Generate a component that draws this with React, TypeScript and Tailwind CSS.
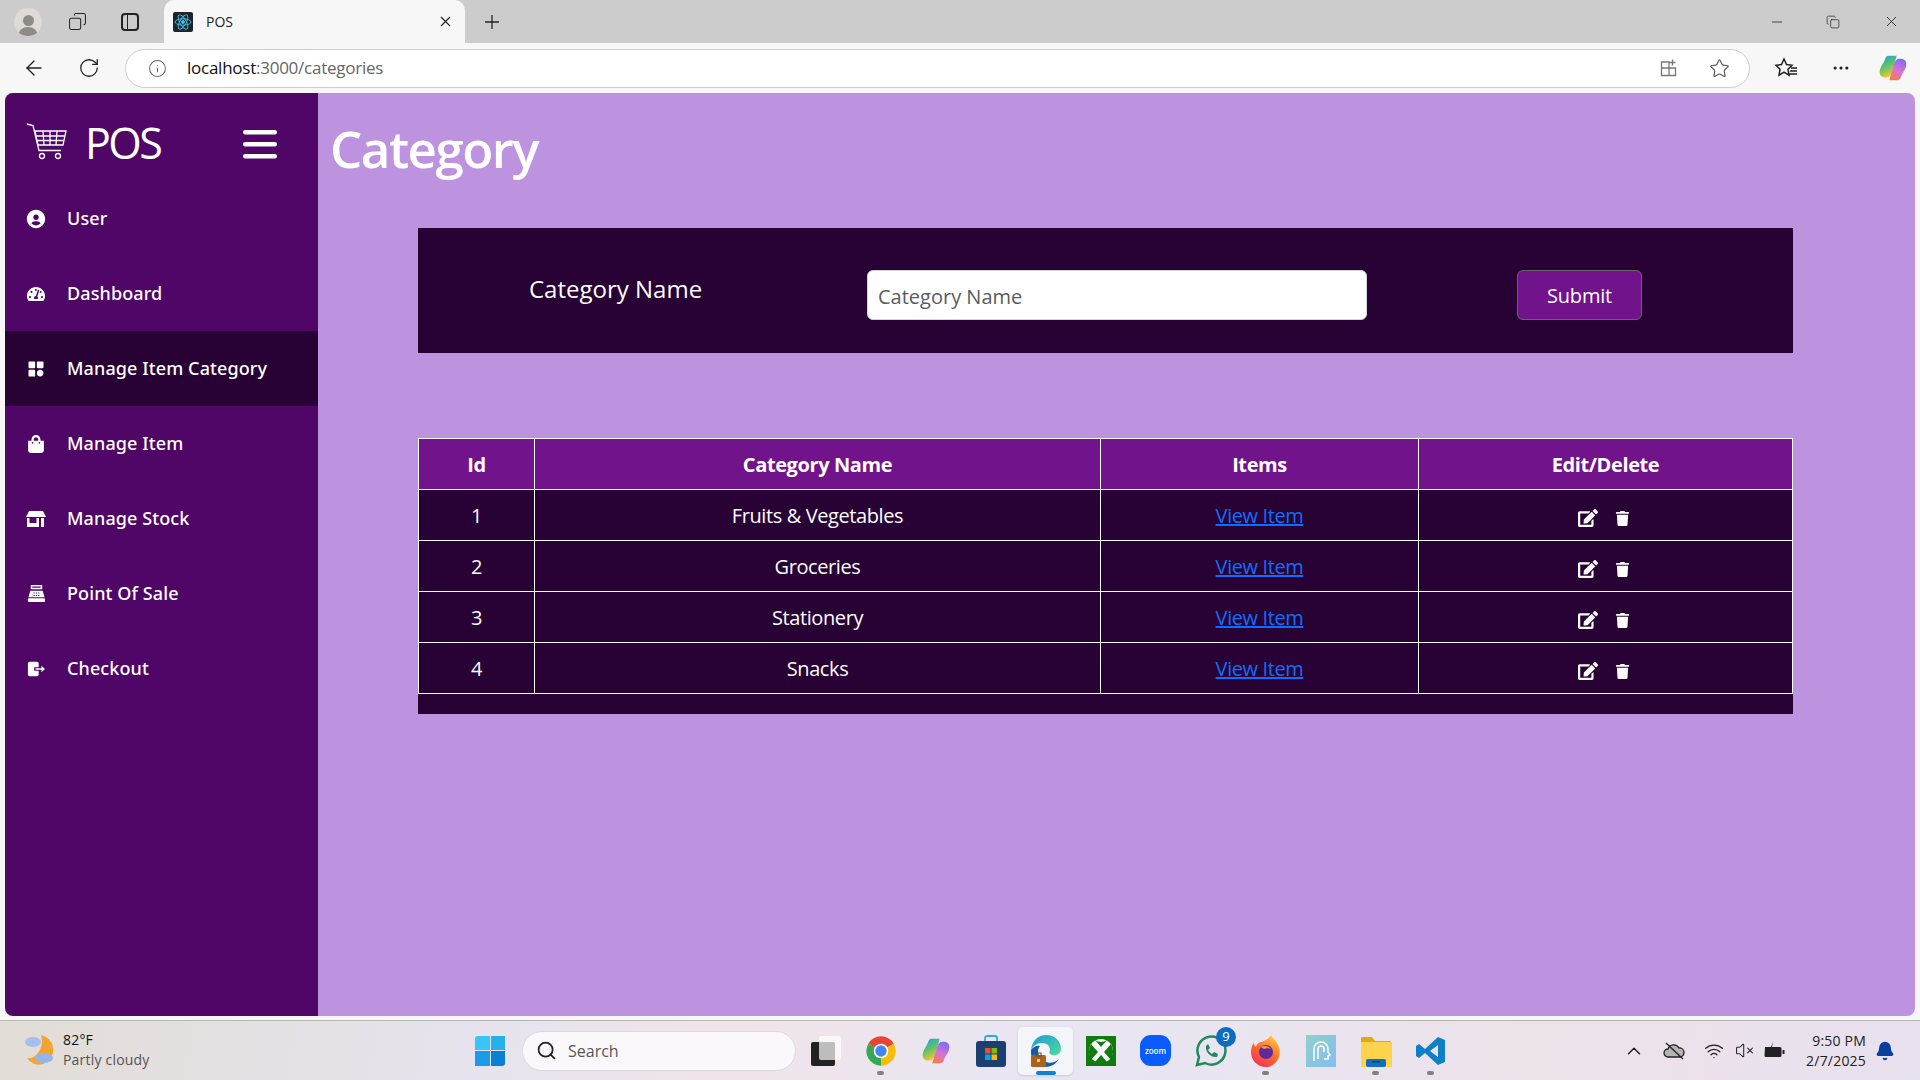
import { ArrowLeft, Bell, ChevronUp, Copy, Info, Minus, MoreHorizontal, Plus, RotateCw, Search, Star, VolumeX, Wifi, X } from 'lucide-react';
import { BiSolidCategory, BiSolidUserCircle } from 'react-icons/bi';
import { FaEdit, FaShoppingBag, FaTachometerAlt, FaTrash } from 'react-icons/fa';

function StoreIcon({ size }: { size: number }) {
  return (
    <svg width={size} height={size} viewBox="0 0 20 20" fill="white">
      <path d="M3 2h14l3 6H0z" />
      <path d="M1 9h2.500v5h7V9H13v9H1z" />
      <rect x="15" y="9" width="3" height="9" />
    </svg>
  );
}

function RegisterIcon({ size }: { size: number }) {
  return (
    <svg width={size} height={size} viewBox="0 0 20 20" fill="white">
      <path d="M4 1h12v4.500H4zM5.500 2.500v1.500h9V2.500z" fillRule="evenodd" />
      <path d="M3.500 7h13l2 7h-17zM7 9v1h1.200V9zm2.400 0v1h1.200V9zm2.400 0v1H13V9zM7 11.500v1h1.200v-1zm2.400 0v1h1.200v-1zm2.400 0v1H13v-1z" fillRule="evenodd" />
      <rect x="1" y="15" width="18" height="4" rx="1" />
    </svg>
  );
}

function CheckoutIcon({ size }: { size: number }) {
  return (
    <svg width={size} height={size} viewBox="0 0 20 20" fill="white">
      <path d="M1 4a2 2 0 0 1 2-2h8a2 2 0 0 1 2 2v4H8v4h5v4a2 2 0 0 1-2 2H3a2 2 0 0 1-2-2z" />
      <path d="M9.500 9.200h6.500V6.500l4 3.500-4 3.500v-2.700H9.500z" />
    </svg>
  );
}

const navItems = [
  { label: 'User', icon: BiSolidUserCircle, size: 22 },
  { label: 'Dashboard', icon: FaTachometerAlt, size: 18 },
  { label: 'Manage Item Category', icon: BiSolidCategory, size: 20, active: true },
  { label: 'Manage Item', icon: FaShoppingBag, size: 18 },
  { label: 'Manage Stock', icon: StoreIcon, size: 20 },
  { label: 'Point Of Sale', icon: RegisterIcon, size: 19 },
  { label: 'Checkout', icon: CheckoutIcon, size: 18 },
];

const categories = [
  { id: 1, name: 'Fruits & Vegetables' },
  { id: 2, name: 'Groceries' },
  { id: 3, name: 'Stationery' },
  { id: 4, name: 'Snacks' },
];

function CopilotIcon({ size }: { size: number }) {
  return (
    <svg width={size} height={size} viewBox="0 0 32 32">
      <defs>
        <linearGradient id="copA" x1="0" y1="0" x2="0.4" y2="1">
          <stop offset="0" stopColor="#1f9be8" />
          <stop offset="0.55" stopColor="#5cc46a" />
          <stop offset="1" stopColor="#f2c531" />
        </linearGradient>
        <linearGradient id="copB" x1="0.7" y1="0" x2="0.3" y2="1">
          <stop offset="0" stopColor="#7b6cf0" />
          <stop offset="0.55" stopColor="#d872d6" />
          <stop offset="1" stopColor="#f77a4a" />
        </linearGradient>
      </defs>
      <path d="M11 3h9l-5 17c-1 4-3 6-6 6H7C3 26 1 22 2 18c1-4 4-7 5-10 1-3 2-5 4-5z" fill="url(#copA)" />
      <path d="M21 29h-9l5-17c1-4 3-6 6-6h2c4 0 6 4 5 8-1 4-4 7-5 10-1 3-2 5-4 5z" fill="url(#copB)" />
    </svg>
  );
}

function CartLogo() {
  return (
    <svg width="42" height="40" viewBox="0 0 42 40" fill="none" stroke="white" strokeWidth="1.3">
      <path d="M1 2l6 1.5 6 25h22" />
      <path d="M9 9h31l-3 14H12z" />
      <path d="M10.5 14h28M11.5 18.500h26M17 9l1 14M24 9v14M31 9l-1 14" />
      <circle cx="16" cy="34" r="2.500" />
      <circle cx="32" cy="34" r="2.500" />
    </svg>
  );
}

function Sidebar() {
  return (
    <aside className="w-[313px] shrink-0 bg-[#4f0666] text-white">
      <div className="flex h-[88px] items-center pl-[21px] pt-[10px]">
        <CartLogo />
        <span className="ml-[17px] text-[43px] font-normal leading-none tracking-[-2.5px]">POS</span>
        <svg className="ml-[83px] mt-1" width="34" height="30" viewBox="0 0 34 30" fill="white">
          <rect x="0" y="1" width="34" height="4.500" rx="2.200" />
          <rect x="0" y="13" width="34" height="4.500" rx="2.200" />
          <rect x="0" y="25" width="34" height="4.500" rx="2.200" />
        </svg>
      </div>
      <nav>
        {navItems.map((item) => (
          <a key={item.label} className={`flex h-[75px] items-center font-['Noto_Sans',sans-serif] text-[18px] font-medium ${item.active ? 'bg-[#280235]' : ''}`}>
            <span className="flex w-[62px] justify-center">
              <item.icon size={item.size} />
            </span>
            <span className="tracking-[0.1px]">{item.label}</span>
          </a>
        ))}
      </nav>
    </aside>
  );
}

function CategoryForm() {
  return (
    <div className="flex h-[125px] items-center bg-[#280235] text-white">
      <label className="ml-[111px] mb-[4px] w-[338px] text-[24px]">Category Name</label>
      <input placeholder="Category Name" className="mt-[8px] h-[50px] w-[500px] rounded-[6px] border border-gray-300 bg-white px-[10px] pt-[3px] text-[20px] placeholder:text-[#595c5f]" />
      <button className="ml-[150px] mt-[8px] h-[50px] w-[125px] rounded-[6px] border border-[#666] bg-[#71138b] pt-[2px] text-[20px] tracking-[-0.2px] text-white">Submit</button>
    </div>
  );
}

function CategoryTable() {
  return (
    <div className="mt-[85px] bg-[#280235] pb-[20px] text-white">
      <table className="w-full table-fixed border-collapse text-center text-[20px] tracking-[-0.4px]">
        <thead>
          <tr className="h-[51px] bg-[#71138b] font-bold">
            <th className="w-[116px] border border-white pt-[2px]">Id</th>
            <th className="w-[566px] border border-white pt-[2px]">Category Name</th>
            <th className="w-[318px] border border-white pt-[2px]">Items</th>
            <th className="border border-white pt-[2px]">Edit/Delete</th>
          </tr>
        </thead>
        <tbody>
          {categories.map((c) => (
            <tr key={c.id} className="h-[51px]">
              <td className="border border-white pt-[2px]">{c.id}</td>
              <td className="border border-white pt-[2px]">{c.name}</td>
              <td className="border border-white pt-[2px]">
                <a href="#" className="text-[#0d6efd] underline">View Item</a>
              </td>
              <td className="border border-white">
                <div className="flex items-center justify-center gap-[17px] pr-[3px] pt-[6px]">
                  <FaEdit size={20} />
                  <FaTrash size={15} />
                </div>
              </td>
            </tr>
          ))}
        </tbody>
      </table>
    </div>
  );
}

function BrowserChrome() {
  return (
    <>
      <div className="flex h-[43px] items-center bg-[#cccccc] text-[#222]">
        <div className="ml-[14px] flex h-[28px] w-[28px] flex-col items-center justify-end overflow-hidden rounded-full bg-[#dedbd6]">
          <div className="h-[11px] w-[11px] rounded-full bg-[#8f8c87]" />
          <div className="mt-[1px] h-[9px] w-[20px] rounded-t-full bg-[#8f8c87]" />
        </div>
        <Copy size={19} strokeWidth={1.3} className="ml-[26px] -scale-x-100" />
        <div className="ml-[34px] flex h-[18px] w-[18px] overflow-hidden rounded-[4px] border-2 border-[#222]">
          <div className="w-[5px] border-r border-[#222]" />
        </div>
        <div className="ml-[25px] flex h-[43px] w-[301px] items-center rounded-t-[10px] bg-[#f7f7f7] pl-[9px]">
          <svg width="20" height="20" viewBox="0 0 20 20" fill="none" stroke="#3fc4e8" strokeWidth="0.9">
            <rect width="20" height="20" rx="2" fill="#20232a" stroke="none" />
            <ellipse cx="10" cy="10" rx="8" ry="3.200" />
            <ellipse cx="10" cy="10" rx="8" ry="3.200" transform="rotate(60 10 10)" />
            <ellipse cx="10" cy="10" rx="8" ry="3.200" transform="rotate(120 10 10)" />
            <circle cx="10" cy="10" r="1.500" fill="#3fc4e8" />
          </svg>
          <span className="ml-[13px] text-[14px]">POS</span>
          <X size={17} className="ml-auto mr-[11px]" strokeWidth={1.6} />
        </div>
        <Plus size={22} strokeWidth={1.4} className="ml-[16px]" />
        <div className="ml-auto flex items-center">
          <Minus size={16} strokeWidth={1.2} className="mr-[41px]" />
          <Copy size={14} strokeWidth={1.2} className="mr-[43px]" />
          <X size={17} strokeWidth={1.2} className="mr-[20px]" />
        </div>
      </div>
      <div className="flex h-[50px] items-center bg-[#f7f7f7] text-[#222]">
        <ArrowLeft size={24} strokeWidth={1.4} className="ml-[22px]" />
        <RotateCw size={22} strokeWidth={1.4} className="ml-[32px]" />
        <div className="ml-[25px] flex h-[39px] w-[1625px] items-center rounded-full border border-[#cfcfcf] bg-white">
          <Info size={19} strokeWidth={1.3} className="ml-[22px] text-[#666]" />
          <span className="ml-[20px] text-[17px] tracking-[-0.25px] text-[#111]">
            localhost<span className="text-[#666]">:3000/categories</span>
          </span>
          <svg className="ml-auto" width="20" height="20" viewBox="0 0 20 20" fill="none" stroke="#777" strokeWidth="1.300">
            <path d="M2.500 4h7.500v6h6.500v7.500h-14zM2.500 10h7.500v7.500M13.500 1.500v6M10.500 4.500h6" />
          </svg>
          <Star size={21} strokeWidth={1.3} className="ml-[30px] mr-[19px] text-[#555]" />
        </div>
        <svg className="ml-[24px]" width="24" height="22" viewBox="0 0 24 22" fill="none" stroke="#222" strokeWidth="1.500">
          <path d="M10 2l2.500 5.500 5.500.7-4 4 1 6-5-3-5 3 1-6-4-4 5.500-.7z" />
          <path d="M17 11h6M16 14h7M15 17h8" />
        </svg>
        <MoreHorizontal size={20} strokeWidth={1.8} className="ml-[33px]" />
        <span className="ml-[27px]"><CopilotIcon size={30} /></span>
      </div>
    </>
  );
}

function TaskIcon({ children, dot, active }: { children: React.ReactNode; dot?: boolean; active?: boolean }) {
  return (
    <div className={`relative flex h-[48px] w-[55px] items-center justify-center rounded-[5px] ${active ? 'bg-[#f4f5fb] shadow-sm' : ''}`}>
      {children}
      {dot && <span className="absolute bottom-0 h-[4px] w-[7px] rounded-full bg-[#808080]" />}
      {active && <span className="absolute bottom-0 h-[4px] w-[20px] rounded-full bg-[#0f7fd8]" />}
    </div>
  );
}

function Taskbar() {
  return (
    <div className="flex h-[60px] items-center border-t border-[#b9b6b8] bg-[linear-gradient(100deg,#e2ddd6_0%,#e6e3ee_25%,#f0e4ea_38%,#e8e6f2_55%,#ece2ea_80%,#e8e1ee_100%)]">
      <div className="flex w-[462px] items-center pb-[2px] pl-[24px]">
        <svg width="32" height="36" viewBox="0 0 32 36">
          <path d="M17 3a15 15 0 0 1 2 29 14 14 0 0 1-16-6c9 2 18-11 14-23z" fill="#f2a631" />
          <ellipse cx="9" cy="10" rx="8" ry="5" fill="#a3c0ee" />
          <ellipse cx="20" cy="26" rx="9" ry="5" fill="#92b6ec" />
        </svg>
        <div className="ml-[7px] text-[14px] leading-[20px] tracking-[0.2px]">
          <div className="text-[#111]">82°F</div>
          <div className="text-[#555]">Partly cloudy</div>
        </div>
      </div>
      <div className="flex w-[60px] justify-center pr-[4px]">
        <div className="grid h-[30px] w-[30px] grid-cols-2 gap-[1px]">
          <div className="rounded-tl-[3px] bg-[#3bc4f7]" />
          <div className="bg-[#26b0ef]" />
          <div className="bg-[#1a9be6]" />
          <div className="rounded-br-[3px] bg-[#0a7fd6]" />
        </div>
      </div>
      <div className="flex h-[40px] w-[274px] items-center rounded-full border border-[#dcdae0] bg-[#fbf8fb]">
        <Search size={21} strokeWidth={2} className="ml-[13px] text-[#222]" />
        <span className="ml-[11px] text-[16px] text-[#555]">Search</span>
      </div>
      <div className="ml-[2px] flex items-center">
        <TaskIcon>
          <div className="relative h-[30px] w-[30px]">
            <div className="absolute bottom-0 left-0 h-[24px] w-[24px] rounded-[2px] bg-[#222]" />
            <div className="absolute right-0 top-0 h-[24px] w-[22px] rounded-[2px] bg-white/70" />
          </div>
        </TaskIcon>
        <TaskIcon dot>
          <svg width="32" height="32" viewBox="0 0 48 48">
            <path d="M24 24L43.050 13A22 22 0 0 0 4.950 13z" fill="#ea4335" />
            <path d="M24 24L4.950 13A22 22 0 0 0 24 46z" fill="#34a853" />
            <path d="M24 24L24 46A22 22 0 0 0 43.050 13z" fill="#fbbc05" />
            <circle cx="24" cy="24" r="11" fill="#fff" />
            <circle cx="24" cy="24" r="8.500" fill="#4285f4" />
          </svg>
        </TaskIcon>
        <TaskIcon><CopilotIcon size={30} /></TaskIcon>
        <TaskIcon>
          <svg width="30" height="32" viewBox="0 0 30 32">
            <path d="M9 7V3a2 2 0 0 1 2-2h8a2 2 0 0 1 2 2v4" fill="none" stroke="#2aa8e8" strokeWidth="1.800" />
            <rect y="6" width="30" height="26" rx="3" fill="#1c3f72" />
            <rect x="9" y="13" width="5.500" height="5.500" fill="#f25022" />
            <rect x="15.500" y="13" width="5.500" height="5.500" fill="#7fba00" />
            <rect x="9" y="19.500" width="5.500" height="5.500" fill="#00a4ef" />
            <rect x="15.500" y="19.500" width="5.500" height="5.500" fill="#ffb900" />
          </svg>
        </TaskIcon>
        <TaskIcon active>
          <svg width="32" height="34" viewBox="0 0 32 34">
            <defs>
              <linearGradient id="edgeG" x1="0" y1="0" x2="1" y2="1">
                <stop offset="0" stopColor="#1e9ad8" />
                <stop offset="1" stopColor="#4fdc9a" />
              </linearGradient>
            </defs>
            <path d="M1 16C2 6 9 1 16 1c9 0 15 6 15 14 0 5-5 7-9 6-3-1-3-3-2-5 0-4-3-7-8-7C7 9 3 12 1 16z" fill="url(#edgeG)" />
            <path d="M1 16c2-3 6-5 9-4-3 3-3 11 4 15 5 3 11 2 15-2-3 5-8 8-14 8C7 33 0 26 1 16z" fill="#0f5ea8" />
            <rect x="1" y="21" width="15" height="12" rx="1.500" fill="#a8641c" />
            <rect x="6" y="19" width="5" height="3" fill="none" stroke="#7a4610" />
            <rect x="7" y="25" width="3" height="3" fill="#f2c36b" />
          </svg>
        </TaskIcon>
        <TaskIcon>
          <svg width="30" height="30" viewBox="0 0 30 30">
            <rect width="30" height="30" fill="#107c10" />
            <circle cx="15" cy="15" r="12" fill="#fff" />
            <path d="M9 4Q15 8 21 4L15 11zM5 8L12 16L5 24Q1 15 5 8zM25 8L18 16L25 24Q29 15 25 8zM15 19L8 27Q15 30 22 27z" fill="#107c10" />
          </svg>
        </TaskIcon>
        <TaskIcon>
          <div className="flex h-[31px] w-[31px] items-center justify-center rounded-[11px] bg-[#0b5cff] text-[8px] font-semibold text-white">zoom</div>
        </TaskIcon>
        <TaskIcon>
          <svg width="32" height="34" viewBox="0 0 32 34" fill="none" stroke="#1f8a5b" strokeWidth="2.500">
            <path d="M2 31l2-8a14 14 0 1 1 6 6z" />
            <path d="M11 12c-1 6 5 12 11 11l1-3-4-2-2 2c-2-1-3-3-4-4l2-2-2-4z" fill="#1f8a5b" stroke="none" />
          </svg>
          <span className="absolute right-[2px] top-0 flex h-[20px] w-[20px] items-center justify-center rounded-full bg-[#0b6cc4] text-[13px] text-white">9</span>
        </TaskIcon>
        <TaskIcon dot>
          <svg width="30" height="32" viewBox="0 0 30 32">
            <defs>
              <linearGradient id="foxG" x1="0.8" y1="0" x2="0.2" y2="1">
                <stop offset="0" stopColor="#ffd23f" />
                <stop offset="0.5" stopColor="#ff6a2b" />
                <stop offset="1" stopColor="#f0305a" />
              </linearGradient>
            </defs>
            <path d="M20 0c2 4 6 6 8 12 3 10-4 20-13 20C6 32 0 25 0 17c0-4 1-7 3-9 0 2 1 3 2 4 1-4 4-5 6-5 3-2 7-3 9-7z" fill="url(#foxG)" />
            <circle cx="15" cy="17" r="7" fill="#5b2a9c" />
            <path d="M10 12c3-2 8-1 10 2-2-1-5-1-7 0z" fill="#ff9a2e" />
          </svg>
        </TaskIcon>
        <TaskIcon>
          <svg width="30" height="32" viewBox="0 0 30 32">
            <defs>
              <linearGradient id="appG" x1="0" y1="0" x2="1" y2="1">
                <stop offset="0" stopColor="#8fd0cc" />
                <stop offset="1" stopColor="#85bdf0" />
              </linearGradient>
            </defs>
            <rect width="30" height="32" fill="url(#appG)" />
            <path d="M8 26V14a7 7 0 0 1 14 0v3l2 3-2 1v3h-4M12 24V14a3 3 0 0 1 6 0v3" fill="none" stroke="#fff" strokeWidth="1.500" />
          </svg>
        </TaskIcon>
        <TaskIcon dot>
          <svg width="32" height="32" viewBox="0 0 32 32">
            <path d="M1 3a1 1 0 0 1 1-1h10l3 4h16v24H1z" fill="#e0a90f" />
            <rect x="1" y="7" width="31" height="25" fill="#fcd34d" />
            <rect x="6" y="24" width="20" height="8" rx="2" fill="#0f6fc0" />
            <rect x="12" y="26" width="8" height="1.500" fill="#0a3f75" />
          </svg>
        </TaskIcon>
        <TaskIcon dot>
          <svg width="30" height="30" viewBox="0 0 30 30">
            <path d="M22 1l7 3v22l-7 3L9 17l-6 5-3-2V10l3-2 6 5zM22 9l-8 6 8 6z" fill="#0f7fc8" />
          </svg>
        </TaskIcon>
      </div>
      <div className="ml-auto flex items-center text-[#222]">
        <ChevronUp size={22} strokeWidth={1.6} />
        <svg className="ml-[18px]" width="22" height="20" viewBox="0 0 22 20" fill="#b5b3b5" stroke="#222" strokeWidth="1.300">
          <path d="M5 16a4 4 0 0 1 0-8 6 6 0 0 1 11-1 4.500 4.500 0 0 1 1 9z" />
          <path d="M3 2l17 16" fill="none" />
        </svg>
        <Wifi size={20} strokeWidth={1.6} className="ml-[19px]" />
        <VolumeX size={19} strokeWidth={1.3} className="ml-[11px]" />
        <svg className="ml-[9px]" width="22" height="20" viewBox="0 0 22 20" fill="#222">
          <path d="M2 6h6l2-5-1 5h8a1.500 1.500 0 0 1 1.500 1.500v7A1.500 1.500 0 0 1 17 16H3a1.500 1.500 0 0 1-1.500-1.500z" />
          <rect x="19.500" y="9" width="2" height="4" />
        </svg>
        <div className="ml-[21px] text-right text-[14px] leading-[20px] tracking-[0.2px] text-[#222]">
          <div>9:50 PM</div>
          <div>2/7/2025</div>
        </div>
        <Bell size={20} fill="#0a3f9c" stroke="#0a3f9c" className="ml-[9px] mr-[25px]" />
      </div>
    </div>
  );
}

export default function App() {
  return (
    <div className="flex h-screen w-full flex-col overflow-hidden bg-[#f7f7f7] font-['Open_Sans',sans-serif]">
      <BrowserChrome />
      <div className="mx-[5px] mb-[4px] flex min-h-0 flex-1 overflow-hidden rounded-[8px]">
        <Sidebar />
        <main className="flex-1 bg-[#bd93e0]">
          <h1 className="ml-[12px] mt-[20px] h-[115px] text-[51px] font-semibold leading-[70px] tracking-[-1.5px] text-white">Category</h1>
          <div className="ml-[100px] w-[1375px]">
            <CategoryForm />
            <CategoryTable />
          </div>
        </main>
      </div>
      <Taskbar />
    </div>
  );
}
